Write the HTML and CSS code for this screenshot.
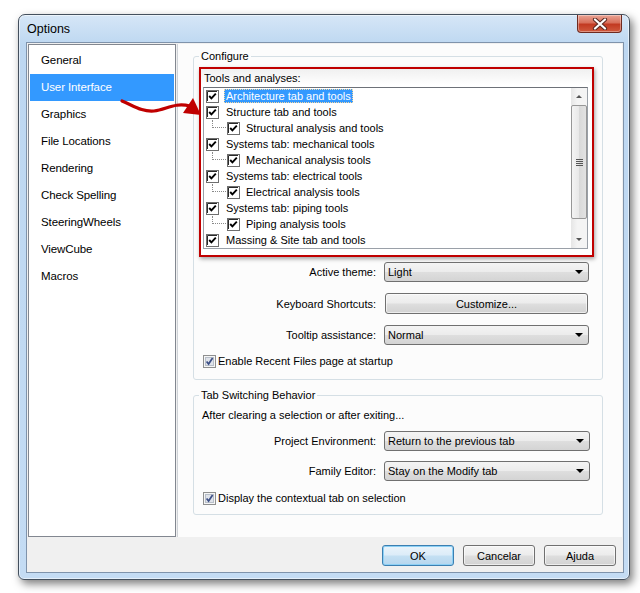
FILE: index.html
```html
<!DOCTYPE html>
<html>
<head>
<meta charset="utf-8">
<title>Options</title>
<link rel="stylesheet" href="styles.css">
</head>
<body>
<div class="window">
  <div class="titlebar">
    <span class="title">Options</span>
    <div class="close">
      <svg width="16" height="12" viewBox="0 0 16 12"><path d="M3 1.5 L13 10.5 M13 1.5 L3 10.5" stroke="#5a2a22" stroke-width="4.2" stroke-linecap="round"/><path d="M3 1.5 L13 10.5 M13 1.5 L3 10.5" stroke="#ffffff" stroke-width="2.2" stroke-linecap="round"/></svg>
    </div>
  </div>
  <div class="client">
    <div class="main">
      <ul class="nav">
        <li>General</li>
        <li class="sel">User Interface</li>
        <li>Graphics</li>
        <li>File Locations</li>
        <li>Rendering</li>
        <li>Check Spelling</li>
        <li>SteeringWheels</li>
        <li>ViewCube</li>
        <li>Macros</li>
      </ul>
      <div class="page">
        <fieldset class="group config">
          <legend>Configure</legend>
          <div class="highlight">
            <div class="tools-label">Tools and analyses:</div>
            <div class="tree">
              <div class="items">
                <div class="row"><svg class="cb" width="13" height="13" viewBox="0 0 13 13"><rect x="0.5" y="0.5" width="12" height="12" fill="#fff" stroke="#6e6e6e"/><path d="M1.5 11V1.5H11" stroke="#2a2a2a" fill="none"/><path d="M3.2 6 L5.4 8.3 L9.8 3.6" stroke="#000" stroke-width="1.9" fill="none"/></svg><span class="txt selected">Architecture tab and tools</span></div>
                <div class="row"><svg class="cb" width="13" height="13" viewBox="0 0 13 13"><rect x="0.5" y="0.5" width="12" height="12" fill="#fff" stroke="#6e6e6e"/><path d="M1.5 11V1.5H11" stroke="#2a2a2a" fill="none"/><path d="M3.2 6 L5.4 8.3 L9.8 3.6" stroke="#000" stroke-width="1.9" fill="none"/></svg><span class="txt">Structure tab and tools</span></div>
                <div class="row child"><span class="conn"></span><svg class="cb" width="13" height="13" viewBox="0 0 13 13"><rect x="0.5" y="0.5" width="12" height="12" fill="#fff" stroke="#6e6e6e"/><path d="M1.5 11V1.5H11" stroke="#2a2a2a" fill="none"/><path d="M3.2 6 L5.4 8.3 L9.8 3.6" stroke="#000" stroke-width="1.9" fill="none"/></svg><span class="txt">Structural analysis and tools</span></div>
                <div class="row"><svg class="cb" width="13" height="13" viewBox="0 0 13 13"><rect x="0.5" y="0.5" width="12" height="12" fill="#fff" stroke="#6e6e6e"/><path d="M1.5 11V1.5H11" stroke="#2a2a2a" fill="none"/><path d="M3.2 6 L5.4 8.3 L9.8 3.6" stroke="#000" stroke-width="1.9" fill="none"/></svg><span class="txt">Systems tab: mechanical tools</span></div>
                <div class="row child"><span class="conn"></span><svg class="cb" width="13" height="13" viewBox="0 0 13 13"><rect x="0.5" y="0.5" width="12" height="12" fill="#fff" stroke="#6e6e6e"/><path d="M1.5 11V1.5H11" stroke="#2a2a2a" fill="none"/><path d="M3.2 6 L5.4 8.3 L9.8 3.6" stroke="#000" stroke-width="1.9" fill="none"/></svg><span class="txt">Mechanical analysis tools</span></div>
                <div class="row"><svg class="cb" width="13" height="13" viewBox="0 0 13 13"><rect x="0.5" y="0.5" width="12" height="12" fill="#fff" stroke="#6e6e6e"/><path d="M1.5 11V1.5H11" stroke="#2a2a2a" fill="none"/><path d="M3.2 6 L5.4 8.3 L9.8 3.6" stroke="#000" stroke-width="1.9" fill="none"/></svg><span class="txt">Systems tab: electrical tools</span></div>
                <div class="row child"><span class="conn"></span><svg class="cb" width="13" height="13" viewBox="0 0 13 13"><rect x="0.5" y="0.5" width="12" height="12" fill="#fff" stroke="#6e6e6e"/><path d="M1.5 11V1.5H11" stroke="#2a2a2a" fill="none"/><path d="M3.2 6 L5.4 8.3 L9.8 3.6" stroke="#000" stroke-width="1.9" fill="none"/></svg><span class="txt">Electrical analysis tools</span></div>
                <div class="row"><svg class="cb" width="13" height="13" viewBox="0 0 13 13"><rect x="0.5" y="0.5" width="12" height="12" fill="#fff" stroke="#6e6e6e"/><path d="M1.5 11V1.5H11" stroke="#2a2a2a" fill="none"/><path d="M3.2 6 L5.4 8.3 L9.8 3.6" stroke="#000" stroke-width="1.9" fill="none"/></svg><span class="txt">Systems tab: piping tools</span></div>
                <div class="row child"><span class="conn"></span><svg class="cb" width="13" height="13" viewBox="0 0 13 13"><rect x="0.5" y="0.5" width="12" height="12" fill="#fff" stroke="#6e6e6e"/><path d="M1.5 11V1.5H11" stroke="#2a2a2a" fill="none"/><path d="M3.2 6 L5.4 8.3 L9.8 3.6" stroke="#000" stroke-width="1.9" fill="none"/></svg><span class="txt">Piping analysis tools</span></div>
                <div class="row"><svg class="cb" width="13" height="13" viewBox="0 0 13 13"><rect x="0.5" y="0.5" width="12" height="12" fill="#fff" stroke="#6e6e6e"/><path d="M1.5 11V1.5H11" stroke="#2a2a2a" fill="none"/><path d="M3.2 6 L5.4 8.3 L9.8 3.6" stroke="#000" stroke-width="1.9" fill="none"/></svg><span class="txt">Massing &amp; Site tab and tools</span></div>
              </div>
              <div class="scrollbar">
                <div class="sb-btn"><span class="up"></span></div>
                <div class="thumb"><span class="grip"></span></div>
                <div class="track"></div>
                <div class="sb-btn"><span class="down"></span></div>
              </div>
            </div>
          </div>
          <div class="form">
            <label>Active theme:</label>
            <div class="combo"><span>Light</span><span class="caret"></span></div>
            <label>Keyboard Shortcuts:</label>
            <div class="btn wide">Customize...</div>
            <label>Tooltip assistance:</label>
            <div class="combo"><span>Normal</span><span class="caret"></span></div>
          </div>
          <div class="check">
            <svg width="13" height="13" viewBox="0 0 13 13"><rect x="0.5" y="0.5" width="12" height="12" fill="#f6f6f6" stroke="#8e8f8f"/><rect x="2.5" y="2.5" width="8" height="8" fill="#dfe3ea" stroke="#b8bfc9"/><path d="M3.6 6.4 L5.6 9 L9.6 3" fill="none" stroke="#3c4f86" stroke-width="1.7"/></svg>
            <span>Enable Recent Files page at startup</span>
          </div>
        </fieldset>
        <fieldset class="group tabs">
          <legend>Tab Switching Behavior</legend>
          <div class="after">After clearing a selection or after exiting...</div>
          <div class="form form2">
            <label>Project Environment:</label>
            <div class="combo"><span>Return to the previous tab</span><span class="caret"></span></div>
            <label>Family Editor:</label>
            <div class="combo"><span>Stay on the Modify tab</span><span class="caret"></span></div>
          </div>
          <div class="check check2">
            <svg width="13" height="13" viewBox="0 0 13 13"><rect x="0.5" y="0.5" width="12" height="12" fill="#f6f6f6" stroke="#8e8f8f"/><rect x="2.5" y="2.5" width="8" height="8" fill="#dfe3ea" stroke="#b8bfc9"/><path d="M3.6 6.4 L5.6 9 L9.6 3" fill="none" stroke="#3c4f86" stroke-width="1.7"/></svg>
            <span>Display the contextual tab on selection</span>
          </div>
        </fieldset>
      </div>
    </div>
    <div class="buttons">
      <div class="btn default">OK</div>
      <div class="btn">Cancelar</div>
      <div class="btn">Ajuda</div>
    </div>
  </div>
</div>
<svg class="arrow" width="640" height="593" viewBox="0 0 640 593">
  <path d="M122,101 C134,106 142,112 154,111 C166,110 174,102 190,106" fill="none" stroke="#c00000" stroke-width="3.2" stroke-linecap="round"/>
  <polygon points="193,98 201,115 183,113" fill="#c00000"/>
</svg>
</body>
</html>
```
FILE: styles.css
```css
* { box-sizing: border-box; }
html, body { margin: 0; padding: 0; background: #fff; }
body {
  font-family: "Liberation Sans", Arial, sans-serif;
  font-size: 11px;
  color: #000;
  width: 640px;
  height: 593px;
  overflow: hidden;
  position: relative;
}
.window {
  margin: 14px 0 0 18px;
  width: 612px;
  height: 566px;
  border: 1px solid #44505e;
  border-radius: 7px 7px 6px 6px;
  background: linear-gradient(to bottom, #d6e6f7 0, #bdd7f1 30px, #c4dcf4 100%);
  box-shadow: 3px 4px 9px rgba(0,0,0,.5), inset 0 0 0 1px rgba(255,255,255,.55);
  padding: 0 5px 6px 7px;
  display: flex;
  flex-direction: column;
}
.titlebar {
  height: 27px;
  flex: none;
  display: flex;
  align-items: flex-start;
}
.title {
  font-size: 12.5px;
  line-height: 14px;
  margin: 7px 0 0 1px;
}
.close {
  margin-left: auto;
  margin-right: 2px;
  width: 45px;
  height: 18px;
  border: 1px solid #6e2a20;
  border-top: none;
  border-radius: 0 0 4px 4px;
  background: linear-gradient(to bottom, #eaa394 0%, #d8705b 45%, #c23a22 55%, #d05a3e 100%);
  box-shadow: inset 0 0 0 1px rgba(255,255,255,.35);
  display: flex;
  align-items: center;
  justify-content: center;
}
.client {
  flex: 1;
  border: 1px solid #7f93ab;
  background: #f0f0f0;
  display: flex;
  flex-direction: column;
}
.main {
  display: flex;
  height: 494px;
  flex: none;
  padding: 1px 1px 0 1px;
}
.nav {
  width: 148px;
  flex: none;
  margin: 0;
  padding: 2px 1px 1px;
  list-style: none;
  background: #fff;
  border: 1px solid #828790;
}
.nav li {
  height: 27px;
  line-height: 27px;
  padding-left: 11px;
  font-size: 11.5px;
  letter-spacing: -0.1px;
}
.nav li.sel {
  background: #3399ff;
  color: #fff;
}
.page {
  flex: 1;
  margin-left: 1px;
  border-left: 1px solid #cfd3d8;
  background: #fcfcfc;
  padding: 5px 19px 0 15px;
}
.group {
  margin: 0;
  min-width: 0;
  border: 1px solid #d5dfe5;
  border-radius: 3px;
}
.group legend {
  padding: 0 2px;
  line-height: 14px;
  font-size: 11px;
}
.config { padding: 4px 8px 11px 5px; }
.highlight {
  border: 2px solid #c00000;
  height: 190px;
  padding: 0 4px 0 2px;
  box-shadow: 1px 2px 4px rgba(0,0,0,.35);
  background: linear-gradient(to bottom, #f0f0f0, #fff 16px);
}
.tools-label {
  height: 18px;
  line-height: 14px;
  padding: 2px 0 0 1px;
}
.tree {
  height: 162px;
  border: 1px solid #9aa0a8;
  border-top-color: #6d7178;
  background: #fff;
  display: flex;
}
.items { flex: 1; }
.row {
  height: 16px;
  display: flex;
  align-items: center;
  padding-left: 2px;
}
.row .cb { flex: none; }
.row .txt {
  margin-left: 5px;
  padding: 0 2px;
  line-height: 14px;
  height: 14px;
  white-space: nowrap;
}
.row .txt.selected {
  background: #3399ff;
  color: #fff;
  outline: 1px dotted #f7d8a0;
  outline-offset: -1px;
}
.row.child { padding-left: 8px; }
.row.child .conn {
  align-self: flex-start;
  width: 14px;
  height: 8px;
  flex: none;
  border-left: 1px dotted #8a8a8a;
  border-bottom: 1px dotted #8a8a8a;
}
.row.child .cb { margin-left: 1px; }
.row.child .txt { margin-left: 4px; }
.scrollbar {
  width: 16px;
  flex: none;
  display: flex;
  flex-direction: column;
  background: linear-gradient(to right, #e6e6e6, #f4f4f4 40%, #f4f4f4);
}
.sb-btn {
  height: 17px;
  flex: none;
  display: flex;
  align-items: center;
  justify-content: center;
}
.up { border-left: 3px solid transparent; border-right: 3px solid transparent; border-bottom: 3px solid #555; }
.down { border-left: 3px solid transparent; border-right: 3px solid transparent; border-top: 3px solid #555; }
.thumb {
  height: 114px;
  flex: none;
  border: 1px solid #979797;
  border-radius: 2px;
  background: linear-gradient(to right, #f4f4f4, #e8e8e8 50%, #d9d9d9 51%, #e2e2e2);
  display: flex;
  align-items: center;
  justify-content: center;
}
.grip {
  width: 7px;
  height: 7px;
  background: repeating-linear-gradient(to bottom, #555 0, #555 1px, transparent 1px, transparent 2px);
}
.track { flex: 1; }
.form {
  display: grid;
  grid-template-columns: 1fr 205px;
  column-gap: 8px;
  row-gap: 11px;
  margin-top: 5px;
  padding-right: 5px;
}
.form label {
  text-align: right;
  align-self: center;
  line-height: 14px;
}
.combo {
  height: 20px;
  border: 1px solid #707070;
  border-radius: 3px;
  background: linear-gradient(to bottom, #f4f4f4 0%, #ececec 48%, #dedede 52%, #d4d4d4 100%);
  display: flex;
  align-items: center;
  padding-left: 3px;
}
.caret {
  margin-left: auto;
  margin-right: 5px;
  border-left: 4px solid transparent;
  border-right: 4px solid transparent;
  border-top: 4px solid #000;
}
.btn {
  height: 21px;
  border: 1px solid #707070;
  border-radius: 3px;
  background: linear-gradient(to bottom, #f4f4f4 0%, #ececec 48%, #dedede 52%, #d2d2d2 100%);
  display: flex;
  align-items: center;
  justify-content: center;
  box-shadow: inset 0 0 0 1px rgba(255,255,255,.6);
}
.btn.wide { margin: 0 1px; }
.check {
  display: flex;
  align-items: center;
  gap: 2px;
  height: 14px;
  margin-top: 9px;
  padding-left: 4px;
}
.tabs {
  margin-top: 8px;
  padding: 6px 8px 9px 5px;
}
.after {
  line-height: 14px;
  padding-left: 3px;
}
.form2 {
  margin-top: 9px;
  row-gap: 10px;
  grid-template-columns: 1fr 206px;
  padding-right: 4px;
}
.check2 { margin-top: 10px; }
.buttons {
  flex: 1;
  display: flex;
  justify-content: flex-end;
  gap: 9px;
  padding: 8px 7px 0 0;
}
.buttons .btn { width: 72px; }
.buttons .btn.default {
  border-color: #3c7fb1;
  background: linear-gradient(to bottom, #eaf4fb 0%, #dcecf8 48%, #c4e0f3 52%, #b6d6ee 100%);
  box-shadow: inset 0 0 0 1px #8cd0f5;
}
.arrow {
  position: absolute;
  left: 0;
  top: 0;
  pointer-events: none;
}
```
